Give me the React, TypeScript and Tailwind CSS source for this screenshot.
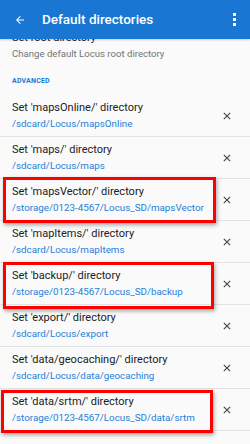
import React from "react";

type Item = { title: string; path: string; box?: string };

const items: Item[] = [
  { title: "Set 'mapsOnline/' directory", path: "/sdcard/Locus/mapsOnline" },
  { title: "Set 'maps/' directory", path: "/sdcard/Locus/maps" },
  { title: "Set 'mapsVector/' directory", path: "/storage/0123-4567/Locus_SD/mapsVector", box: "left-[3px] -top-[2px] w-[213px] h-[46px]" },
  { title: "Set 'mapItems/' directory", path: "/sdcard/Locus/mapItems" },
  { title: "Set 'backup/' directory", path: "/storage/0123-4567/Locus_SD/backup", box: "left-[3px] -top-[1px] w-[211px] h-[47px]" },
  { title: "Set 'export/' directory", path: "/sdcard/Locus/export" },
  { title: "Set 'data/geocaching/' directory", path: "/sdcard/Locus/data/geocaching" },
  { title: "Set 'data/srtm/' directory", path: "/storage/0123-4567/Locus_SD/data/srtm", box: "left-[1px] top-[1px] w-[212px] h-[43px]" },
];

function CloseIcon() {
  return (
    <svg width="8" height="8" viewBox="0 0 8 8" className="shrink-0">
      <path d="M0.8 0.8 L7.2 7.2 M7.2 0.8 L0.8 7.2" stroke="#444" strokeWidth="1.1" />
    </svg>
  );
}

export default function App() {
  return (
    <div
      className="w-[250px] h-[444px] overflow-hidden bg-[#fafafa] flex flex-col"
      style={{ fontFamily: "Roboto, 'Noto Sans', sans-serif" }}
    >
      <div className="h-[39px] shrink-0 bg-[#1976d2] flex items-center relative z-10 shadow-[0_1px_2px_rgba(0,0,0,0.2)]">
        <svg width="12" height="12" viewBox="0 0 24 24" className="ml-[14px]">
          <path d="M20 11H7.83l5.59-5.59L12 4l-8 8 8 8 1.41-1.41L7.83 13H20v-2z" fill="#fff" />
        </svg>
        <div className="ml-[16px] text-white text-[13.5px] font-medium">Default directories</div>
        <div className="ml-auto mr-[14px] flex flex-col gap-[2px]">
          <div className="w-[3px] h-[3px] bg-white" />
          <div className="w-[3px] h-[3px] bg-white" />
          <div className="w-[3px] h-[3px] bg-white" />
        </div>
      </div>
      <div className="flex-1 overflow-hidden">
        <div className="-mt-[15px] flex flex-col">
          <div className="h-[42px] px-3 flex flex-col justify-center">
            <div className="text-[11px] leading-[16px] text-[#212121]">Set root directory</div>
            <div className="text-[9.6px] leading-[15px] text-[#757575]">Change default Locus root directory</div>
          </div>
          <div className="h-[29px] px-3 flex items-center pt-[1px]">
            <div className="text-[7px] font-bold text-[#1976d2] tracking-[0.2px]">ADVANCED</div>
          </div>
          {items.map((it) => (
            <div key={it.title} className="relative h-[42px] border-b border-[#e4e4e4] pl-3 pr-[19px] flex items-center">
              <div className="flex-1 flex flex-col">
                <div className="text-[11px] leading-[16px] text-[#212121]">{it.title}</div>
                <div className="text-[9.8px] leading-[15px] text-[#1e7fd9]">{it.path}</div>
              </div>
              <CloseIcon />
              {it.box && (
                <div className={`absolute border-[3px] border-[#f00] shadow-[1px_2px_4px_rgba(0,0,0,0.35)] ${it.box}`} />
              )}
            </div>
          ))}
        </div>
      </div>
    </div>
  );
}
